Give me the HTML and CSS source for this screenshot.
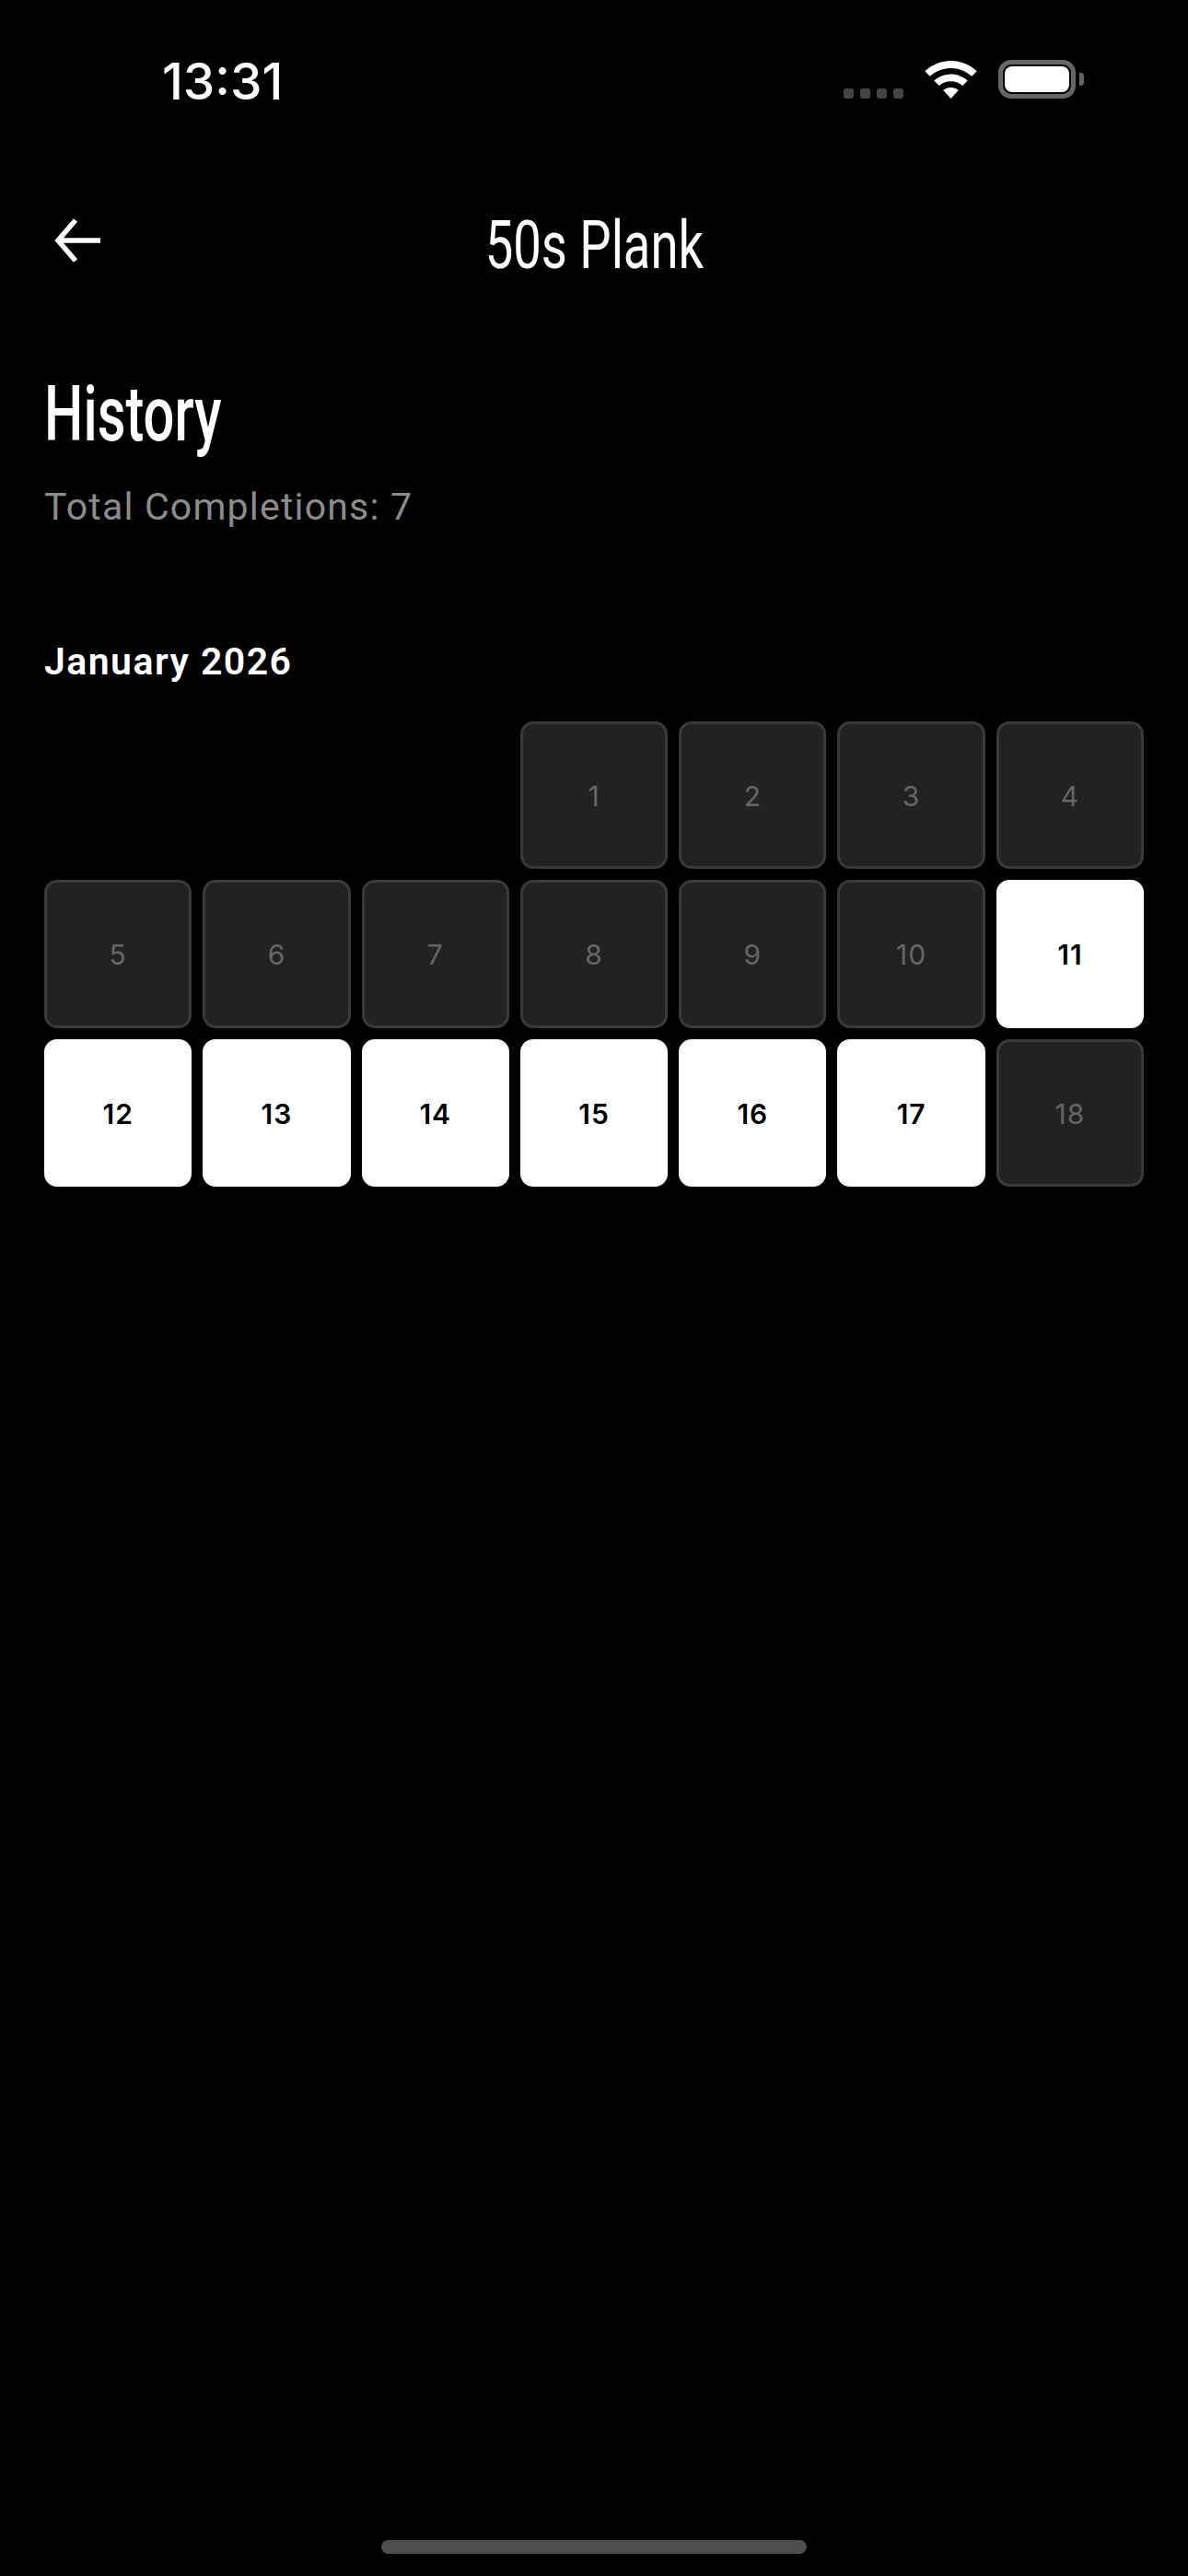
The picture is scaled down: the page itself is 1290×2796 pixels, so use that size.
FILE: index.html
```html
<!DOCTYPE html>
<html lang="en">
<head>
  <meta charset="UTF-8">
  <title>50s Plank - History</title>
  <link rel="stylesheet" href="styles.css">
</head>
<body>

<div class="page">
  <div class="status-bar">
    <span class="status-time">13:31</span>
    <div class="status-icons">
      <div class="signal-dots"><i></i><i></i><i></i><i></i></div>
      <svg class="wifi-icon" width="57" height="41" viewBox="0 0 57 41">
        <path fill="#fff" d="M28.5 0C17.6 0 7.8 4.2.3 11.2l5.4 5.600C11.700 11.300 19.700 7.900 28.500 7.900s16.800 3.400 22.800 8.900l5.400-5.600C49.200 4.200 39.400 0 28.500 0z"/>
        <path fill="#fff" d="M28.500 14.500c-7 0-13.400 2.700-18.200 7l5.500 5.600c3.400-3 7.800-4.800 12.700-4.800s9.300 1.800 12.700 4.800l5.500-5.600c-4.800-4.300-11.200-7-18.200-7z"/>
        <path fill="#fff" d="M28.500 29c-3.200 0-6.100 1.200-8.300 3.100L28.500 41l8.300-8.900C34.600 30.200 31.700 29 28.500 29z"/>
      </svg>
      <div class="battery">
        <div class="battery-body"><div class="battery-fill"></div></div>
        <div class="battery-cap"></div>
      </div>
    </div>
  </div>

  <div class="top-bar">
    <svg class="back-icon" width="50" height="48" viewBox="0 0 50 48">
      <path d="M50 24H4M23 2L4 24l19 22" fill="none" stroke="#fff" stroke-width="5.500"/>
    </svg>
    <h1 class="top-title">50s Plank</h1>
  </div>

  <div class="summary">
    <h2 class="summary-title">History</h2>
    <p class="summary-total">Total Completions: 7</p>
  </div>

  <div class="month">
    <h3 class="month-name">January 2026</h3>
    <div class="calendar">
      <div class="day day-first">1</div>
      <div class="day">2</div>
      <div class="day">3</div>
      <div class="day">4</div>
      <div class="day">5</div>
      <div class="day">6</div>
      <div class="day">7</div>
      <div class="day">8</div>
      <div class="day">9</div>
      <div class="day">10</div>
      <div class="day done">11</div>
      <div class="day done">12</div>
      <div class="day done">13</div>
      <div class="day done">14</div>
      <div class="day done">15</div>
      <div class="day done">16</div>
      <div class="day done">17</div>
      <div class="day">18</div>
    </div>
  </div>

  <div class="home-bar"></div>
</div>

</body>
</html>
```

FILE: styles.css
```css
body {
  margin: 0;
  background: #000;
  color: #fff;
  font-family: Roboto, sans-serif;
}
h1, h2, h3, p {
  margin: 0;
}
.page {
  display: flex;
  flex-direction: column;
  width: 1290px;
  height: 2796px;
  overflow: hidden;
}

/* status bar */
.status-bar {
  display: flex;
  justify-content: space-between;
  align-items: flex-start;
  height: 238px;
  box-sizing: border-box;
  padding: 56px 113px 0 176px;
}
.status-time {
  font-family: Inter, sans-serif;
  font-size: 55px;
  font-weight: 500;
  line-height: 64px;
}
.status-icons {
  display: flex;
  align-items: flex-end;
  padding-top: 9px;
}
.signal-dots {
  display: flex;
  gap: 7px;
  margin-right: 23px;
}
.signal-dots i {
  display: block;
  width: 11px;
  height: 11px;
  background: #444;
  border-radius: 3px;
}
.wifi-icon {
  display: block;
  margin-right: 23px;
}
.battery {
  display: flex;
  align-items: center;
}
.battery-body {
  width: 84px;
  height: 42px;
  box-sizing: border-box;
  padding: 2px;
  border: 5px solid #666;
  border-radius: 14px;
}
.battery-fill {
  height: 100%;
  background: #fff;
  border-radius: 8px;
}
.battery-cap {
  width: 5px;
  height: 14px;
  margin-left: 4px;
  background: #666;
  border-radius: 0 4px 4px 0;
}

/* top bar */
.top-bar {
  position: relative;
  display: flex;
  justify-content: center;
  align-items: center;
  height: 56px;
}
.back-icon {
  position: absolute;
  left: 59px;
  top: -1px;
}
.top-title {
  font-size: 73px;
  font-weight: 400;
  line-height: 56px;
  transform: scaleX(0.745);
}

/* summary */
.summary {
  padding: 120px 48px 0;
}
.summary-title {
  font-size: 83px;
  font-weight: 500;
  line-height: 72px;
  transform: scaleX(0.72);
  transform-origin: left;
}
.summary-total {
  margin-top: 40px;
  color: #8c8c8c;
  font-size: 41px;
  font-weight: 400;
  line-height: 48px;
  letter-spacing: 1.2px;
}

/* calendar */
.month {
  padding: 120px 48px 0;
}
.month-name {
  font-size: 41px;
  font-weight: 600;
  line-height: 48px;
  letter-spacing: 1.45px;
}
.calendar {
  display: grid;
  grid-template-columns: repeat(7, 1fr);
  gap: 12px;
  margin-top: 41px;
}
.day {
  display: flex;
  justify-content: center;
  align-items: center;
  aspect-ratio: 1;
  box-sizing: border-box;
  padding-top: 2px;
  background: #222;
  border: 3px solid #3a3a3a;
  border-radius: 14px;
  color: #666;
  font-family: Inter, sans-serif;
  font-size: 30px;
  letter-spacing: 1px;
}
.day-first {
  grid-column-start: 4;
}
.day.done {
  background: #fff;
  border-color: #fff;
  color: #000;
  font-weight: 600;
}

.home-bar {
  width: 462px;
  height: 15px;
  margin: auto auto 24px;
  background: #4d4d4d;
  border-radius: 8px;
}
```
